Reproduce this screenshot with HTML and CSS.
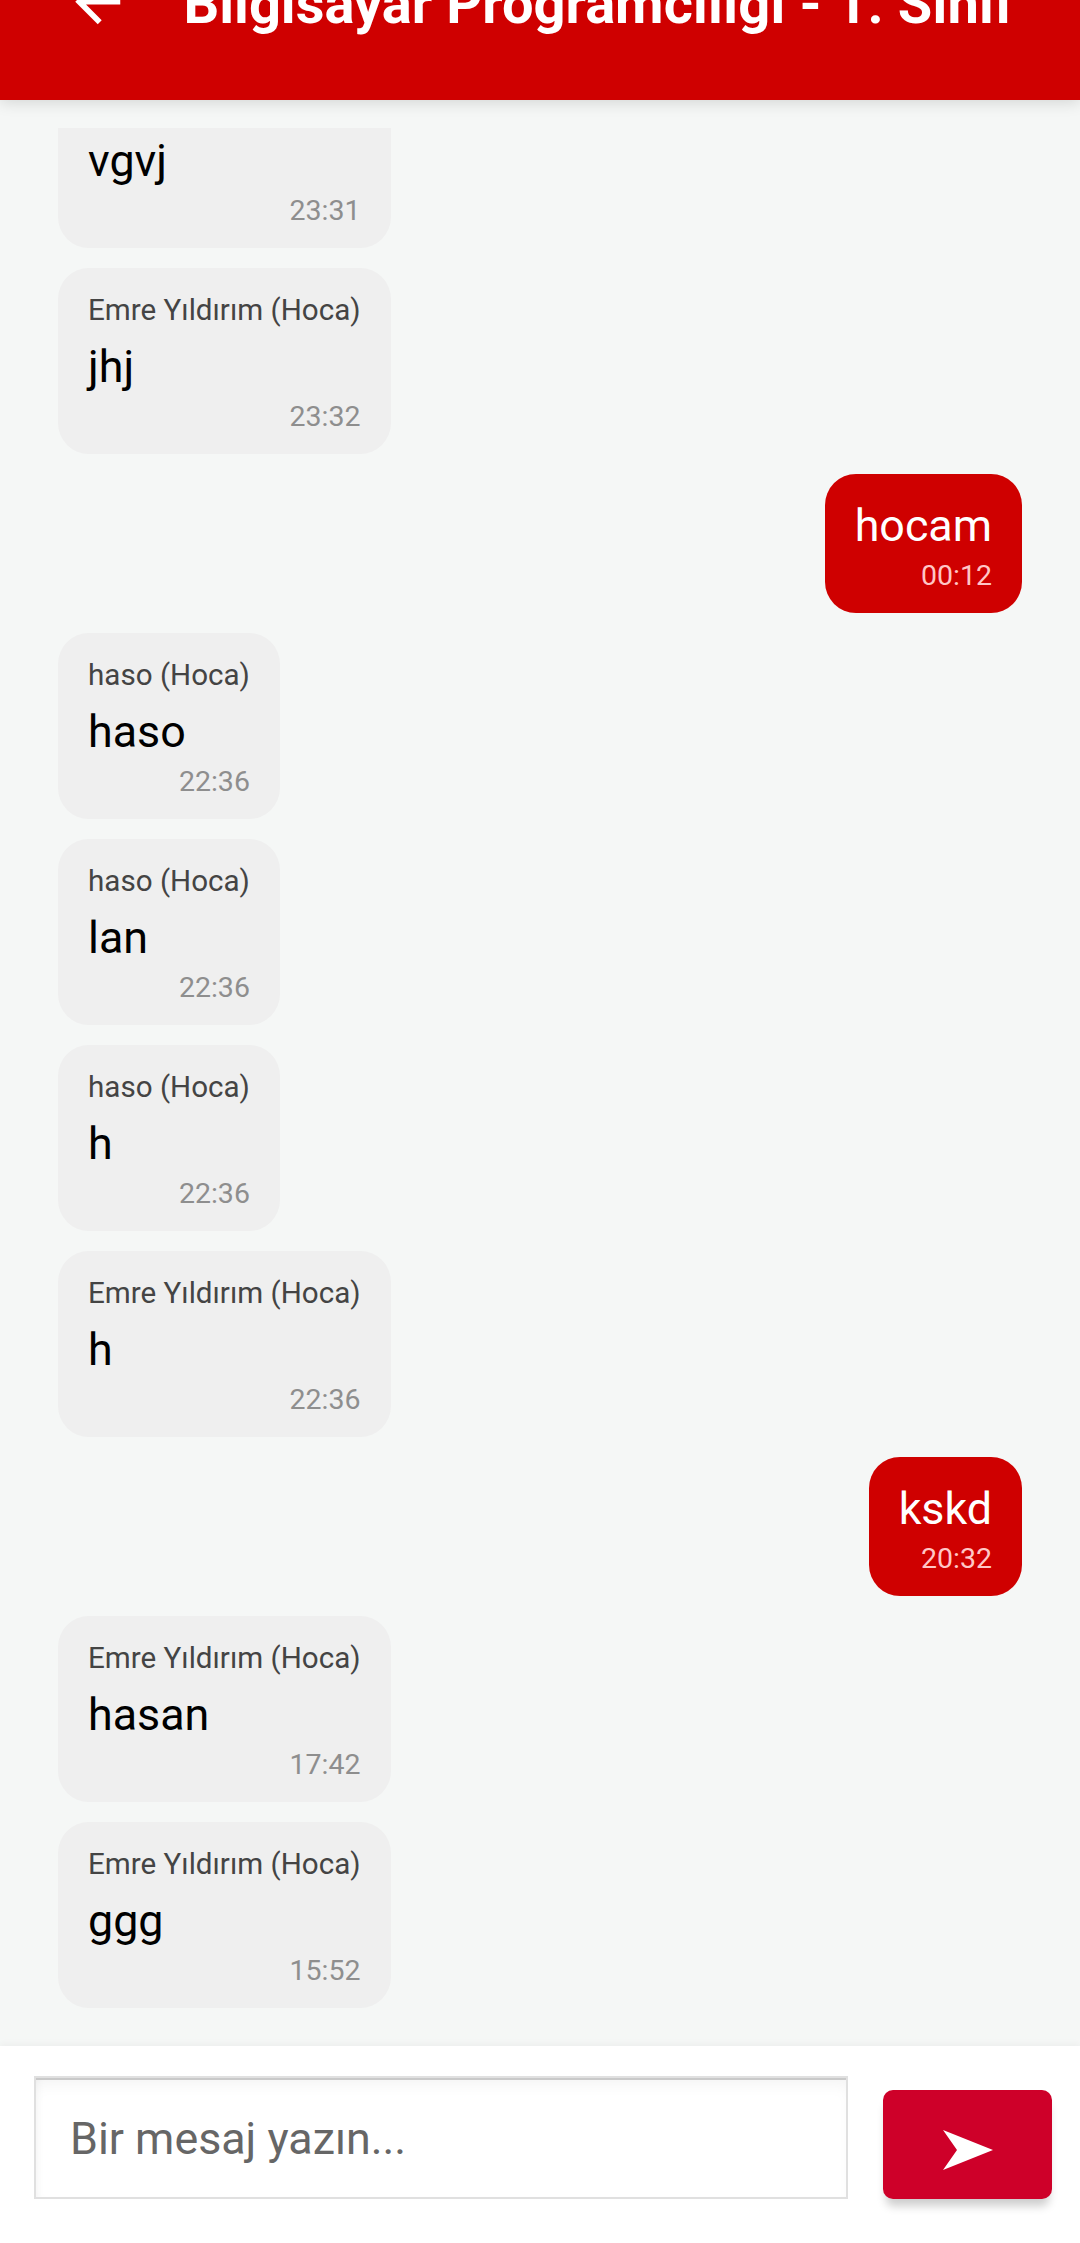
FILE: index.html
```html
<!DOCTYPE html>
<html lang="tr">
<head>
<meta charset="utf-8">
<title>Sohbet</title>
<link rel="stylesheet" href="styles.css">
</head>
<body>
<div class="screen">
  <header class="topbar">
    <div class="topbar-row">
      <svg class="back" viewBox="0 0 24 24" width="67.5" height="67.5"><path d="M20 11H7.83l5.59-5.59L12 4l-8 8 8 8 1.41-1.41L7.83 13H20v-2z" fill="#fff"/></svg>
      <h1 class="title">Bilgisayar Programcılığı - 1. Sınıf</h1>
    </div>
  </header>
  <main class="chat">
    <div class="list">
      <div class="msg in"><div class="name">Emre Yıldırım (Hoca)</div><div class="text">vgvj</div><div class="time">23:31</div></div>
      <div class="msg in"><div class="name">Emre Yıldırım (Hoca)</div><div class="text">jhj</div><div class="time">23:32</div></div>
      <div class="msg out"><div class="text">hocam</div><div class="time">00:12</div></div>
      <div class="msg in"><div class="name">haso (Hoca)</div><div class="text">haso</div><div class="time">22:36</div></div>
      <div class="msg in"><div class="name">haso (Hoca)</div><div class="text">lan</div><div class="time">22:36</div></div>
      <div class="msg in"><div class="name">haso (Hoca)</div><div class="text">h</div><div class="time">22:36</div></div>
      <div class="msg in"><div class="name">Emre Yıldırım (Hoca)</div><div class="text">h</div><div class="time">22:36</div></div>
      <div class="msg out"><div class="text">kskd</div><div class="time">20:32</div></div>
      <div class="msg in"><div class="name">Emre Yıldırım (Hoca)</div><div class="text">hasan</div><div class="time">17:42</div></div>
      <div class="msg in"><div class="name">Emre Yıldırım (Hoca)</div><div class="text">ggg</div><div class="time">15:52</div></div>
    </div>
  </main>
  <footer class="composer">
    <div class="field">Bir mesaj yazın...</div>
    <button class="send" type="button"><svg class="send-icon" viewBox="0 0 50 40" width="50" height="40"><path d="M0 0 50 20 0 40 14 20Z" fill="#fff"/></svg></button>
  </footer>
</div>
</body>
</html>
```
FILE: styles.css
```css
* { box-sizing: border-box; }
html, body { margin: 0; padding: 0; }
body { font-family: Roboto, "Noto Sans", sans-serif; background: #f5f7f6; }
.screen { width: 1080px; height: 2243px; display: flex; flex-direction: column; overflow: hidden; }
.topbar { height: 100px; flex: none; background: #cf0000; box-shadow: 0 3px 14px rgba(0,0,0,.13); position: relative; z-index: 2; clip-path: inset(0 0 -40px 0); }
.topbar-row { display: flex; align-items: center; height: 67.5px; margin-top: -32px; padding-left: 64px; }
.back { flex: none; }
.title { margin: 4px 0 0 52px; font-size: 56px; line-height: 66px; font-weight: 700; color: #fff; white-space: nowrap; }
.chat { flex: 1; min-height: 0; padding-top: 28px; display: flex; }
.list { flex: 1; overflow: hidden; display: flex; flex-direction: column; gap: 20px; padding: 0 58px; }
.msg { flex: none; border-radius: 31px; padding: 26px 30px 21px; width: fit-content; display: flex; flex-direction: column; }
.msg:first-child { margin-top: -66px; }
.in { background: #efefef; align-self: flex-start; }
.out { background: #cf0000; align-self: flex-end; color: #fff; padding-top: 25px; }
.name { font-size: 29.6px; line-height: 33px; margin-bottom: 13px; color: #444; white-space: nowrap; }
.text { font-size: 44.8px; line-height: 53px; color: #000; }
.out .text { color: #fff; }
.time { font-size: 28.5px; line-height: 33px; margin-top: 7px; color: #8e8e8e; text-align: right; }
.out .time { color: #ffc6c6; }
.composer { flex: none; height: 197px; background: #fff; display: flex; align-items: flex-start; padding: 30px 28px 0 34px; gap: 35px; box-shadow: 0 -3px 6px rgba(0,0,0,.03); position: relative; }
.field { width: 815px; height: 123px; border: 2px solid #e0e0e0; box-shadow: inset 0 2px 0 #c9c9c9, inset 0 12px 16px -6px rgba(0,0,0,.05), inset 6px 0 10px -6px rgba(0,0,0,.05); padding: 2px 34px 0; display: flex; align-items: center; font-size: 44.8px; color: #666; }
.send { width: 169px; height: 109px; margin-top: 14px; border: 0; padding: 10px 0 0; background: #ce0029; border-radius: 10px; box-shadow: 0 10px 10px -3px rgba(0,0,0,.2); display: flex; align-items: center; justify-content: center; }
.send-icon { flex: none; }
```
